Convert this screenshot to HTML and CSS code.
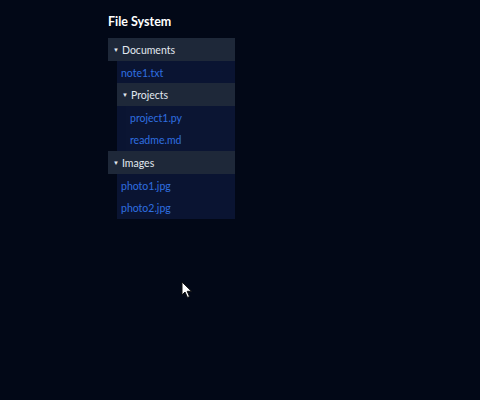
FILE: index.html
```html
<!DOCTYPE html>
<html>
<head>
<meta charset="utf-8">
<link rel="stylesheet" href="styles.css">
</head>
<body>
<div class="page">
  <h1 class="title">File System</h1>
  <div class="tree">
    <div class="folder">
      <div class="folder-head"><span class="caret">▼</span>Documents</div>
      <div class="children">
        <div class="file">note1.txt</div>
        <div class="folder">
          <div class="folder-head"><span class="caret">▼</span>Projects</div>
          <div class="children">
            <div class="file">project1.py</div>
            <div class="file">readme.md</div>
          </div>
        </div>
      </div>
    </div>
    <div class="folder">
      <div class="folder-head"><span class="caret">▼</span>Images</div>
      <div class="children">
        <div class="file">photo1.jpg</div>
        <div class="file">photo2.jpg</div>
      </div>
    </div>
  </div>
</div>
<svg class="cursor" width="12" height="18" viewBox="0 0 12 18"><path d="M1 1 L1 14 L4 11 L6.5 16.5 L8.5 15.6 L6.2 10.3 L10.5 10.3 Z" fill="#ffffff" stroke="#111" stroke-width="1"/></svg>
</body>
</html>
```
FILE: styles.css
```css
html, body {
  margin: 0;
  background: #020817;
  height: 100%;
}
body {
  font-family: "Lato", "Noto Sans", sans-serif;
  position: relative;
}
.page {
  padding: 13px 0 0 108px;
}
.title {
  margin: 0 0 8px 0;
  font-size: 12.5px;
  font-weight: bold;
  color: #ffffff;
  line-height: 17px;
}
.tree {
  width: 127px;
  font-size: 10.5px;
}
.folder-head {
  background: #1e2839;
  color: #e2e8f0;
  padding: 5px 4px 3px 5px;
  line-height: 14.6px;
}
.caret {
  font-size: 6px;
  display: inline-block;
  width: 9px;
  vertical-align: 2px;
}
.children {
  margin-left: 9px;
  background: #0a1432;
}
.children .children {
  background: #0b1533;
}
.file {
  color: #2f6fe0;
  padding: 5px 4px 3px;
  line-height: 14.6px;
}
.cursor {
  position: absolute;
  left: 181px;
  top: 281px;
}
```
